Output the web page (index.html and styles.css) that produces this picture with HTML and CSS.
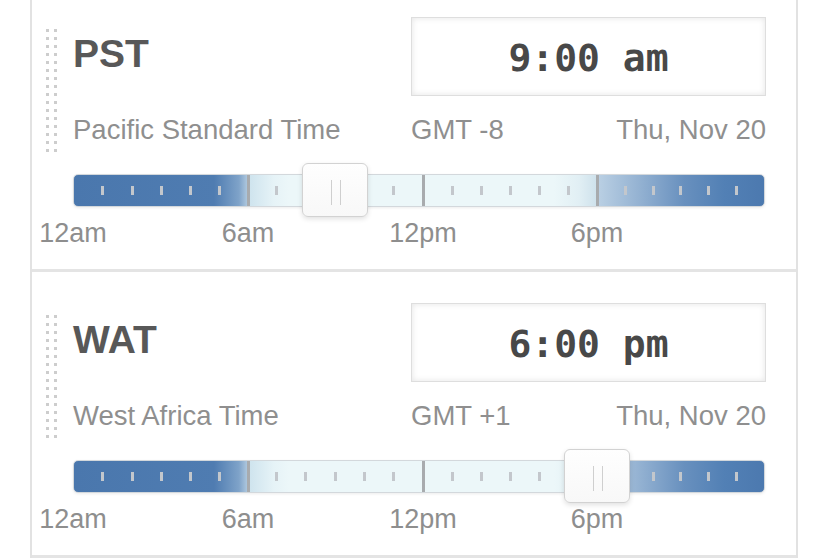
FILE: index.html
```html
<!DOCTYPE html>
<html lang="en">
<head>
<meta charset="utf-8">
<title>Time zones</title>
<link rel="stylesheet" href="styles.css">
</head>
<body>
<div class="list">
  <section class="zone">
    <div class="head">
      <div class="grip"></div>
      <div class="info">
        <h2 class="abbr">PST</h2>
        <div class="clock">9:00 am</div>
        <div class="name">Pacific Standard Time</div>
        <div class="meta"><span>GMT -8</span><span>Thu, Nov 20</span></div>
      </div>
    </div>
    <div class="slider">
      <div class="track">
        <i class="tick" style="left:29px"></i><i class="tick" style="left:59px"></i><i class="tick" style="left:88px"></i><i class="tick" style="left:117px"></i><i class="tick" style="left:146px"></i>
        <i class="major" style="left:175px"></i>
        <i class="tick" style="left:203px"></i><i class="tick" style="left:232px"></i><i class="tick" style="left:262px"></i><i class="tick" style="left:291px"></i><i class="tick" style="left:320px"></i>
        <i class="major" style="left:350px"></i>
        <i class="tick" style="left:379px"></i><i class="tick" style="left:408px"></i><i class="tick" style="left:437px"></i><i class="tick" style="left:466px"></i><i class="tick" style="left:495px"></i>
        <i class="major" style="left:524px"></i>
        <i class="tick" style="left:552px"></i><i class="tick" style="left:580px"></i><i class="tick" style="left:607px"></i><i class="tick" style="left:635px"></i><i class="tick" style="left:663px"></i>
      </div>
      <div class="thumb" style="left:262px"></div>
      <div class="axis">
        <span style="left:0">12am</span><span style="left:175px">6am</span><span style="left:350px">12pm</span><span style="left:524px">6pm</span>
      </div>
    </div>
  </section>
  <section class="zone">
    <div class="head">
      <div class="grip"></div>
      <div class="info">
        <h2 class="abbr">WAT</h2>
        <div class="clock">6:00 pm</div>
        <div class="name">West Africa Time</div>
        <div class="meta"><span>GMT +1</span><span>Thu, Nov 20</span></div>
      </div>
    </div>
    <div class="slider">
      <div class="track">
        <i class="tick" style="left:29px"></i><i class="tick" style="left:59px"></i><i class="tick" style="left:88px"></i><i class="tick" style="left:117px"></i><i class="tick" style="left:146px"></i>
        <i class="major" style="left:175px"></i>
        <i class="tick" style="left:203px"></i><i class="tick" style="left:232px"></i><i class="tick" style="left:262px"></i><i class="tick" style="left:291px"></i><i class="tick" style="left:320px"></i>
        <i class="major" style="left:350px"></i>
        <i class="tick" style="left:379px"></i><i class="tick" style="left:408px"></i><i class="tick" style="left:437px"></i><i class="tick" style="left:466px"></i><i class="tick" style="left:495px"></i>
        <i class="major" style="left:524px"></i>
        <i class="tick" style="left:552px"></i><i class="tick" style="left:580px"></i><i class="tick" style="left:607px"></i><i class="tick" style="left:635px"></i><i class="tick" style="left:663px"></i>
      </div>
      <div class="thumb" style="left:524px"></div>
      <div class="axis">
        <span style="left:0">12am</span><span style="left:175px">6am</span><span style="left:350px">12pm</span><span style="left:524px">6pm</span>
      </div>
    </div>
  </section>
</div>
</body>
</html>
```
FILE: styles.css
```css
* { box-sizing: border-box; }
html, body { margin: 0; padding: 0; background: #fff; }
body {
  font-family: "Liberation Sans", Arial, sans-serif;
  overflow: hidden;
}
.list {
  margin: -14px 0 0 30px;
  width: 768px;
  border-left: 2px solid #e2e2e2;
  border-right: 2px solid #e2e2e2;
}
.zone {
  height: 286px;
  border-bottom: 3px solid #e4e4e4;
  padding: 31px 30px 0 14px;
}
.head {
  display: flex;
  align-items: flex-start;
}
.grip {
  width: 11px;
  height: 123px;
  margin: 12px 16px 0 0;
  flex: none;
  background-image:
    linear-gradient(to bottom, transparent 3px, #fff 3px),
    linear-gradient(to right, #cdcdcd 3px, transparent 3px, transparent 8px, #cdcdcd 8px);
  background-size: 11px 8px, 11px 8px;
}
.info {
  flex: 1;
  display: grid;
  grid-template-columns: 1fr 355px;
}
.abbr {
  margin: 14.5px 0 0;
  font-size: 39px;
  line-height: 44px;
  font-weight: bold;
  color: #585858;
}
.clock {
  height: 79px;
  padding-top: 2px;
  border: 1px solid #dedede;
  background: #fff;
  box-shadow: inset 0 0 6px rgba(0, 0, 0, 0.11);
  display: flex;
  align-items: center;
  justify-content: center;
  font-family: "DejaVu Sans Mono", "Liberation Mono", monospace;
  font-weight: bold;
  font-size: 38px;
  color: #484848;
}
.name, .meta {
  margin-top: 17.5px;
  font-size: 27.5px;
  line-height: 32px;
  color: #8f8f8f;
}
.meta {
  display: flex;
  justify-content: space-between;
}
.slider {
  position: relative;
  margin: 22px 1px 0 27px;
}
.track {
  position: relative;
  height: 33px;
  border: 1px solid #d3d8dc;
  border-radius: 5px;
  box-shadow: 0 1px 3px rgba(0, 0, 0, 0.08);
  background: linear-gradient(to right,
    #4a77ad 0px,
    #4f7cb1 140px,
    #7fa3c9 165px,
    #b2cbe0 174px,
    #cfe4ee 176px,
    #e6f3f7 200px,
    #ecf7f9 215px,
    #ecf7f9 480px,
    #e1eff4 505px,
    #cfe2ec 522px,
    #b9cfe3 525px,
    #94b2d2 565px,
    #6890be 610px,
    #5280b5 650px,
    #4c79af 690px);
}
.tick {
  position: absolute;
  top: 11px;
  width: 3px;
  height: 9px;
  margin-left: -2.5px;
  background: #c3c7cc;
}
.major {
  position: absolute;
  top: 0;
  bottom: 0;
  width: 3px;
  margin-left: -2.5px;
  background: #a8abae;
}
.thumb {
  position: absolute;
  top: -11px;
  width: 66px;
  height: 54px;
  margin-left: -33px;
  border: 1px solid #d2d2d2;
  border-radius: 6px;
  background: linear-gradient(#fefefe, #f8f8f8);
  box-shadow: 0 2px 5px rgba(0, 0, 0, 0.12);
}
.thumb::after {
  content: "";
  position: absolute;
  left: 28px;
  top: 16px;
  width: 8px;
  height: 25px;
  border-left: 1px solid #cfcfcf;
  border-right: 1px solid #cfcfcf;
}
.axis {
  position: relative;
  height: 30px;
  margin-top: 11px;
  font-size: 27px;
  line-height: 30px;
  color: #8e8e8e;
}
.axis span {
  position: absolute;
  top: 0;
  transform: translateX(-50%);
  white-space: nowrap;
}
```
